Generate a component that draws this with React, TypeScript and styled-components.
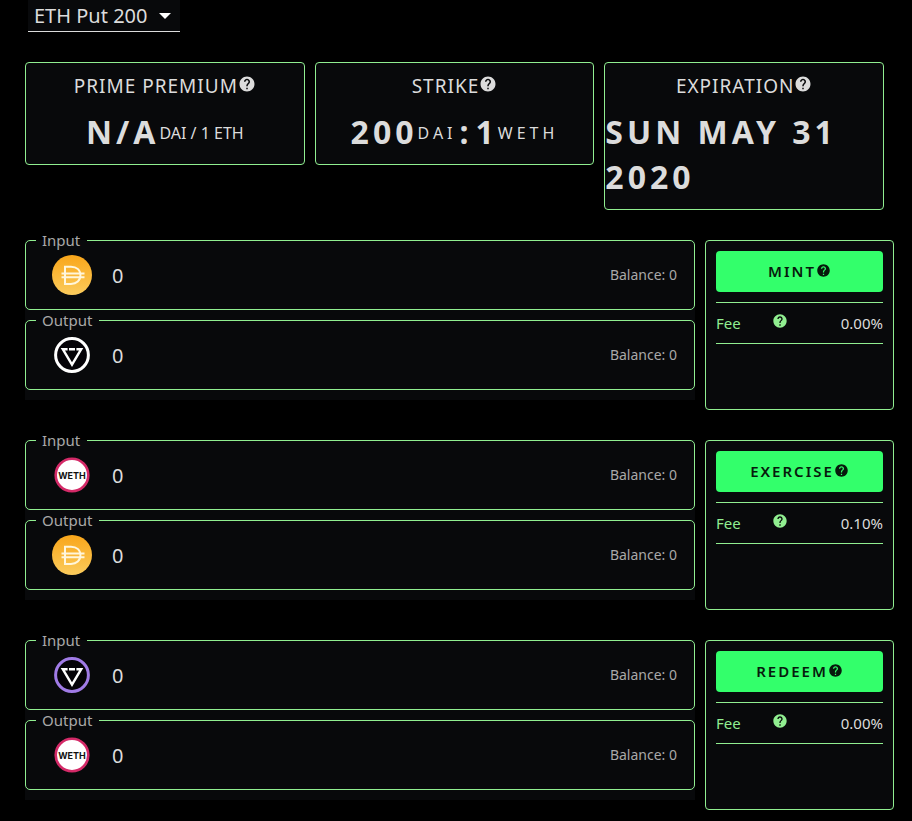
import React, { useId, useState } from "react";
import styled, { createGlobalStyle } from "styled-components";

const color = {
  page: "#000000",
  panel: "#08090b",
  line: "#90ee90",
  accent: "#33ff6b",
  text: "#dcdcdc",
  muted: "#a8a8a8",
};

const GlobalStyle = createGlobalStyle`
  * { box-sizing: border-box; }
  body {
    margin: 0;
    background: ${color.page};
    color: ${color.text};
    font-family: "Noto Sans", "Open Sans", sans-serif;
    font-size: 14px;
  }
`;

const Page = styled.main`
  display: flex;
  flex-direction: column;
  gap: 30px;
  padding: 0 18px 11px 25px;
`;

const OptionPicker = styled.div`
  display: flex;
  align-items: center;
  align-self: flex-start;
  width: 152px;
  height: 32px;
  margin-left: 3px;
  background: ${color.panel};
  border-bottom: 1px solid ${color.text};
`;

const OptionSelect = styled.select`
  appearance: none;
  flex: 1;
  min-width: 0;
  height: 100%;
  padding: 0 0 0 6px;
  border: 0;
  outline: 0;
  background: transparent;
  color: ${color.text};
  font: inherit;
  font-size: 20px;
`;

const Arrow = styled.svg`
  flex: none;
  width: 24px;
  height: 24px;
  margin-left: -24px;
  margin-right: 3px;
  pointer-events: none;
  fill: #ffffff;
`;

const Stats = styled.section`
  display: grid;
  grid-template-columns: repeat(3, 1fr);
  align-items: start;
  gap: 10px;
  margin-right: 10px;
`;

const StatCard = styled.article`
  display: flex;
  flex-direction: column;
  align-items: center;
  gap: 10px;
  padding: 10px 0;
  background: ${color.panel};
  border: 1px solid ${color.line};
  border-radius: 4px;
`;

const StatTitle = styled.h2`
  display: flex;
  margin: 0;
  font-size: 19px;
  font-weight: 400;
  line-height: 26px;
  letter-spacing: 1px;
`;

const StatValue = styled.p`
  margin: 0;
  font-size: 32px;
  font-weight: 700;
  line-height: 45px;
  letter-spacing: 4px;
`;

const Unit = styled.span<{ $wide?: boolean }>`
  display: inline-block;
  vertical-align: 5px;
  font-size: 16px;
  font-weight: 400;
  line-height: 20px;
  letter-spacing: ${(p) => (p.$wide ? "4px" : "0")};
`;

const Ratio = styled.span`
  margin: 0 3px;
`;

const Help = styled.svg<{ $size: number }>`
  flex: none;
  width: ${(p) => p.$size}px;
  height: ${(p) => p.$size}px;
  margin-top: 2px;
  fill: currentColor;
`;

const Trade = styled.section`
  display: grid;
  grid-template-columns: minmax(0, 1fr) 189px;
  gap: 10px;
`;

const Legs = styled.div`
  display: flex;
  flex-direction: column;
  align-self: start;
  gap: 10px;
  padding-bottom: 10px;
  background: ${color.panel};
`;

const Leg = styled.fieldset`
  min-width: 0;
  margin: 0;
  padding: 0 17px 0 10px;
  border: 1px solid ${color.line};
  border-radius: 5px;
`;

const LegName = styled.legend`
  height: 1px;
  padding: 0 7px 0 6px;
  color: ${color.muted};
  font-size: 15px;
  line-height: 1px;
`;

const LegRow = styled.div`
  display: flex;
  align-items: center;
  height: 68px;
  padding-left: 16px;
`;

const TokenIcon = styled.svg`
  flex: none;
  width: 40px;
  height: 40px;
`;

const TokenText = styled.text`
  font: 700 9px "Inter", sans-serif;
  text-anchor: middle;
`;

const Amount = styled.input`
  flex: 1;
  min-width: 0;
  margin-left: 20px;
  padding: 0;
  border: 0;
  outline: 0;
  background: transparent;
  color: ${color.text};
  font: inherit;
  font-size: 20px;
`;

const Balance = styled.span`
  color: ${color.muted};
  font-size: 14px;
  line-height: 20px;
`;

const ActionPanel = styled.aside`
  min-height: 170px;
  padding: 10px;
  background: ${color.panel};
  border: 1px solid ${color.line};
  border-radius: 4px;
`;

const ActionButton = styled.button`
  display: flex;
  justify-content: center;
  width: 100%;
  height: 41px;
  padding: 10px 0;
  border: 0;
  border-radius: 4px;
  background: ${color.accent};
  color: #071a0c;
  font: inherit;
  font-size: 15px;
  font-weight: 600;
  line-height: 21px;
  letter-spacing: 2px;
  cursor: pointer;
`;

const FeeRow = styled.div`
  display: flex;
  align-items: center;
  height: 42px;
  margin-top: 10px;
  border: solid ${color.line};
  border-width: 1px 0;
  font-size: 15px;
`;

const FeeName = styled.span`
  display: flex;
  gap: 31px;
  color: ${color.line};
  line-height: 24px;
`;

const FeeValue = styled.span`
  margin-left: auto;
`;

function HelpIcon({ size }: { size: number }) {
  return (
    <Help $size={size} viewBox="0 0 24 24" aria-hidden="true">
      <path d="M12 2C6.48 2 2 6.48 2 12s4.48 10 10 10 10-4.48 10-10S17.52 2 12 2zm1 17h-2v-2h2v2zm2.07-7.75l-.9.92C13.45 12.9 13 13.5 13 15h-2v-.5c0-1.1.45-2.1 1.17-2.83l1.24-1.26c.37-.36.59-.86.59-1.41 0-1.1-.9-2-2-2s-2 .9-2 2H8c0-2.21 1.79-4 4-4s4 1.79 4 4c0 .88-.36 1.68-.93 2.25z" />
    </Help>
  );
}

type Token = "dai" | "weth" | "prime" | "redeem";

function TokenMark({ token }: { token: Token }) {
  const fillId = useId();
  if (token === "dai") {
    return (
      <TokenIcon viewBox="0 0 40 40" role="img" aria-label="DAI">
        <defs>
          <linearGradient id={fillId} x1="0" y1="0" x2="0" y2="1">
            <stop offset="0" stopColor="#f9a61a" />
            <stop offset="1" stopColor="#fbcb5c" />
          </linearGradient>
        </defs>
        <circle cx="20" cy="20" r="20" fill={`url(#${fillId})`} />
        <path
          d="M13 11.8h6c5.6 0 9.4 3.3 9.4 8.5s-3.8 8.6-9.4 8.6H13zM9.5 18.4h23M9.5 22.2h23"
          fill="none"
          stroke="#fff6dc"
          strokeWidth="2"
        />
      </TokenIcon>
    );
  }
  if (token === "weth") {
    return (
      <TokenIcon viewBox="0 0 40 40" role="img" aria-label="WETH">
        <circle cx="20" cy="20" r="16.3" fill="#fff" stroke="#d42a68" strokeWidth="2.6" />
        <TokenText x="20" y="23.6" fill="#111">WETH</TokenText>
      </TokenIcon>
    );
  }
  return (
    <TokenIcon viewBox="0 0 40 40" role="img" aria-label="Prime">
      <circle
        cx="20"
        cy="20"
        r="16.4"
        fill="#050308"
        stroke={token === "prime" ? "#ffffff" : "#a07be6"}
        strokeWidth="3"
      />
      <path
        d="M15.6 14.2h-4.8L20 29.6l9.2-15.4h-4.8M17 14.2h6"
        fill="none"
        stroke="#fff"
        strokeWidth="2.4"
      />
    </TokenIcon>
  );
}

function TradeLeg({ name, token }: { name: string; token: Token }) {
  const id = useId();
  const [amount, setAmount] = useState("0");
  return (
    <Leg>
      <LegName id={id}>{name}</LegName>
      <LegRow>
        <TokenMark token={token} />
        <Amount aria-labelledby={id} value={amount} onChange={(e) => setAmount(e.target.value)} />
        <Balance>Balance: 0</Balance>
      </LegRow>
    </Leg>
  );
}

const trades: { action: string; fee: string; input: Token; output: Token }[] = [
  { action: "MINT", fee: "0.00%", input: "dai", output: "prime" },
  { action: "EXERCISE", fee: "0.10%", input: "weth", output: "dai" },
  { action: "REDEEM", fee: "0.00%", input: "redeem", output: "weth" },
];

export default function App() {
  return (
    <>
      <GlobalStyle />
      <Page>
        <OptionPicker>
          <OptionSelect aria-label="Option">
            <option>ETH Put 200</option>
          </OptionSelect>
          <Arrow viewBox="0 0 24 24" aria-hidden="true">
            <path d="M6 9l6 6 6-6z" />
          </Arrow>
        </OptionPicker>

        <Stats>
          <StatCard>
            <StatTitle>PRIME PREMIUM<HelpIcon size={18} /></StatTitle>
            <StatValue>N/A<Unit>DAI / 1 ETH</Unit></StatValue>
          </StatCard>
          <StatCard>
            <StatTitle>STRIKE<HelpIcon size={18} /></StatTitle>
            <StatValue>200<Unit $wide>DAI</Unit><Ratio>:</Ratio>1<Unit $wide>WETH</Unit></StatValue>
          </StatCard>
          <StatCard>
            <StatTitle>EXPIRATION<HelpIcon size={18} /></StatTitle>
            <StatValue>SUN MAY 31 2020</StatValue>
          </StatCard>
        </Stats>

        {trades.map((t) => (
          <Trade key={t.action}>
            <Legs>
              <TradeLeg name="Input" token={t.input} />
              <TradeLeg name="Output" token={t.output} />
            </Legs>
            <ActionPanel>
              <ActionButton type="button">{t.action}<HelpIcon size={15} /></ActionButton>
              <FeeRow>
                <FeeName>Fee<HelpIcon size={16} /></FeeName>
                <FeeValue>{t.fee}</FeeValue>
              </FeeRow>
            </ActionPanel>
          </Trade>
        ))}
      </Page>
    </>
  );
}
